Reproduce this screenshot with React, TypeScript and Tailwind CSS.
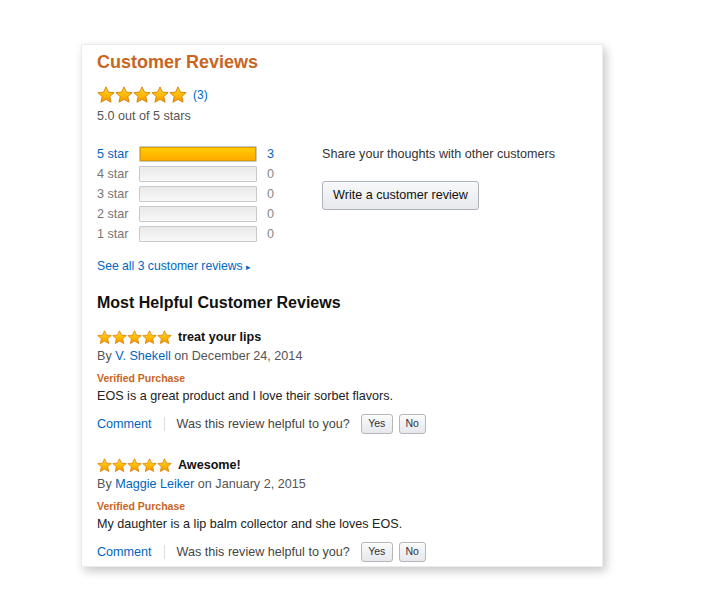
import React from "react";

const FONT = { fontFamily: '"Liberation Sans", Arial, sans-serif' };

function Star({ size }: { size: number }) {
  return (
    <svg width={size} height={size} viewBox="0 0 24 24" className="block">
      <defs>
        <linearGradient id="starfill" x1="0" y1="0" x2="0" y2="1">
          <stop offset="0%" stopColor="#ffdc3c" />
          <stop offset="55%" stopColor="#ffb900" />
          <stop offset="100%" stopColor="#f09400" />
        </linearGradient>
      </defs>
      <path
        d="M12 1.2l3.2 7 7.6.7-5.8 5.1 1.8 7.6L12 17.8l-6.8 3.8 1.8-7.6-5.8-5.1 7.6-.7z"
        fill="url(#starfill)"
        stroke="#d9840a"
        strokeWidth="1.3"
        strokeLinejoin="round"
      />
    </svg>
  );
}

function Stars({ size }: { size: number }) {
  return (
    <div className="flex">
      {[0, 1, 2, 3, 4].map((i) => (
        <Star key={i} size={size} />
      ))}
    </div>
  );
}

const HISTOGRAM = [
  { label: "5 star", count: 3, pct: 100 },
  { label: "4 star", count: 0, pct: 0 },
  { label: "3 star", count: 0, pct: 0 },
  { label: "2 star", count: 0, pct: 0 },
  { label: "1 star", count: 0, pct: 0 },
];

const REVIEWS = [
  {
    title: "treat your lips",
    author: "V. Shekell",
    date: "December 24, 2014",
    body: "EOS is a great product and I love their sorbet flavors.",
  },
  {
    title: "Awesome!",
    author: "Maggie Leiker",
    date: "January 2, 2015",
    body: "My daughter is a lip balm collector and she loves EOS.",
  },
];

function SmallButton({ children, width }: { children: React.ReactNode; width: string }) {
  return (
    <button
      type="button"
      className={`${width} flex h-[20px] items-center justify-center rounded-[3px] border border-[#b3b6bb] bg-gradient-to-b from-[#f9fafb] to-[#e6e8eb] text-[10.5px] text-[#333] shadow-[0_1px_0_rgba(255,255,255,0.6)_inset]`}
    >
      {children}
    </button>
  );
}

function Review({ review, first }: { review: (typeof REVIEWS)[number]; first: boolean }) {
  return (
    <div className={first ? "mt-[16px]" : "mt-[22px]"}>
      <div className="flex h-[18px] items-center">
        <Stars size={15} />
        <span className="ml-[6px] text-[12.6px] font-bold text-[#111]">{review.title}</span>
      </div>
      <p className="mt-[2px] text-[12.6px] leading-[16px] text-[#555]">
        By <span className="text-[#0066c0]">{review.author}</span> on {review.date}
      </p>
      <p className="mt-[7px] text-[10.5px] font-bold leading-[14px] text-[#c8651f]">
        Verified Purchase
      </p>
      <p className="mt-[3px] text-[12.6px] leading-[16px] text-[#222]">{review.body}</p>
      <div className="mt-[10px] flex h-[20px] items-center text-[12.6px]">
        <span className="text-[#0066c0]">Comment</span>
        <span className="mx-[12px] h-[14px] w-px bg-[#ddd]" />
        <span className="text-[#444]">Was this review helpful to you?</span>
        <div className="ml-[11px] flex gap-[6px]">
          <SmallButton width="w-[32px]">Yes</SmallButton>
          <SmallButton width="w-[27px]">No</SmallButton>
        </div>
      </div>
    </div>
  );
}

export default function App() {
  return (
    <div className="min-h-[598px] bg-white pt-[44px]" style={FONT}>
      <section className="ml-[81px] w-[522px] border border-[#ececec] bg-white pb-[4px] pl-[15px] pt-[6px] shadow-[3px_4px_9px_rgba(0,0,0,0.22)]">
        <h2 className="text-[18px] font-bold leading-[22px] text-[#c8651f]">Customer Reviews</h2>

        <div className="mt-[13px] flex h-[18px] items-center">
          <Stars size={18} />
          <span className="ml-[6px] text-[12px] text-[#0066c0]">(3)</span>
        </div>
        <p className="mt-[4px] text-[12.6px] leading-[16px] text-[#555]">5.0 out of 5 stars</p>

        <div className="mt-[20px] flex">
          <div className="w-[225px]">
            {HISTOGRAM.map((row) => (
              <div key={row.label} className="flex h-[20px] items-center text-[12.6px]">
                <span className={`w-[42px] ${row.count ? "text-[#0066c0]" : "text-[#777]"}`}>
                  {row.label}
                </span>
                <div className="h-[16px] w-[118px] overflow-hidden rounded-[1px] border border-[#c9c9c9] bg-gradient-to-b from-[#e9e9e9] to-[#f8f8f8]">
                  {row.pct > 0 ? (
                    <div
                      className="h-full bg-gradient-to-b from-[#ffce00] to-[#ffa700] shadow-[0_0_0_1px_#de9a00_inset]"
                      style={{ width: `${row.pct}%` }}
                    />
                  ) : null}
                </div>
                <span className={`ml-[10px] ${row.count ? "text-[#0066c0]" : "text-[#888]"}`}>
                  {row.count}
                </span>
              </div>
            ))}
          </div>

          <div className="pt-[2px]">
            <p className="text-[12.6px] leading-[16px] text-[#333]">
              Share your thoughts with other customers
            </p>
            <button
              type="button"
              className="mt-[19px] flex h-[29px] w-[157px] items-center justify-center rounded-[3px] border border-[#adb1b8] bg-gradient-to-b from-[#f7f8fa] to-[#e7e9ec] text-[12.6px] text-[#111] shadow-[0_1px_0_rgba(255,255,255,0.6)_inset]"
            >
              Write a customer review
            </button>
          </div>
        </div>

        <p className="mt-[14px] text-[12.2px] leading-[16px] text-[#0066c0]">
          See all 3 customer reviews <span className="text-[9px]">▸</span>
        </p>

        <h3 className="mt-[19px] text-[16px] font-bold leading-[18px] text-[#111]">
          Most Helpful Customer Reviews
        </h3>

        {REVIEWS.map((review, i) => (
          <Review key={review.author} review={review} first={i === 0} />
        ))}
      </section>
    </div>
  );
}
